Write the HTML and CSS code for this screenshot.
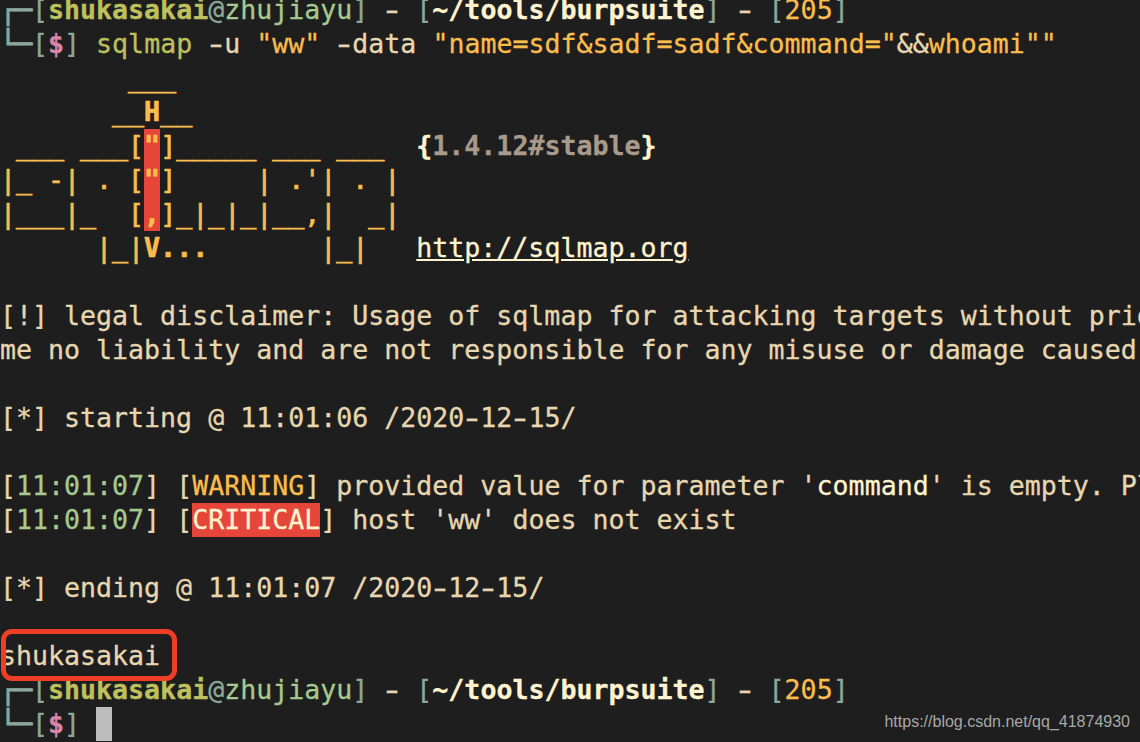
FILE: index.html
```html
<!DOCTYPE html>
<html lang="en">
<head>
<meta charset="utf-8">
<title>sqlmap terminal</title>
<link rel="stylesheet" href="styles.css">
</head>
<body>
<main class="term">
<pre class="screen"><span class="frame"><span class="corner">┌─</span>[</span><b class="olive">shukasakai</b><span class="frame">@</span><span class="green">zhujiayu</span><span class="frame">]</span> <span class="dash">-</span> <span class="frame">[</span><b class="white">~/tools/burpsuite</b><span class="frame">]</span> <span class="dash">-</span> <span class="frame">[</span><span class="yellow">205</span><span class="frame">]</span>
<span class="frame"><span class="corner">└─</span>[</span><b class="pink">$</b><span class="frame">]</span> <span class="olive">sqlmap</span> <span class="dash">-</span>u <span class="yellow">"ww"</span> <span class="dash">-</span>data <span class="yellow">"name=sdf&amp;sadf=sadf&amp;command="</span>&amp;&amp;<span class="yellow">whoami""</span>
<span class="banner">        ___</span>
<span class="banner">       __<b>H</b>__</span>
<span class="banner"> ___ ___[<b class="redcell">"</b>]_____ ___ ___  </span><b class="brace">{</b><b class="version">1.4.12#stable</b><b class="brace">}</b>
<span class="banner">|_ -| . [<b class="redcell">"</b>]     | .'| . |</span>
<span class="banner">|___|_  [<b class="redcell">,</b>]_|_|_|__,|  _|</span>
<span class="banner">      |_|<b>V...</b>       |_|   </span><span class="link">http://sqlmap.org</span>

[!] legal disclaimer: Usage of sqlmap for attacking targets without prior mutual consent is illegal.
me no liability and are not responsible for any misuse or damage caused by this program

[*] starting @ 11:01:06 /2020<span class="dash">-</span>12<span class="dash">-</span>15/

[<span class="green">11:01:07</span>] [<span class="yellow">WARNING</span>] provided value for parameter '<span class="white">command</span>' is empty. Please
[<span class="green">11:01:07</span>] [<span class="critical">CRITICAL</span>] host 'ww' does not exist

[*] ending @ 11:01:07 /2020<span class="dash">-</span>12<span class="dash">-</span>15/

shukasakai
<span class="frame"><span class="corner">┌─</span>[</span><b class="olive">shukasakai</b><span class="frame">@</span><span class="green">zhujiayu</span><span class="frame">]</span> <span class="dash">-</span> <span class="frame">[</span><b class="white">~/tools/burpsuite</b><span class="frame">]</span> <span class="dash">-</span> <span class="frame">[</span><span class="yellow">205</span><span class="frame">]</span>
<span class="frame"><span class="corner">└─</span>[</span><b class="pink">$</b><span class="frame">]</span> <span class="cursor"> </span></pre>
<div class="callout"></div>
<div class="watermark">https://blog.csdn.net/qq_41874930</div>
</main>
</body>
</html>
```
FILE: styles.css
```css
html, body {
  margin: 0;
  height: 100%;
  background: #1e1e1e;
  overflow: hidden;
}
.term {
  position: relative;
  width: 1140px;
  height: 742px;
  overflow: hidden;
  background: #1e1e1e;
}
.screen {
  margin: -7px 0 0;
  font-family: "DejaVu Sans Mono", monospace;
  font-size: 26.6px;
  line-height: 34px;
  color: #e6d7b0;
  white-space: pre;
  -webkit-text-stroke: 0.3px currentColor;
}
b { font-weight: 700; }
.frame { color: #8ba89b; }
.corner { -webkit-text-stroke: 1px currentColor; }
.olive { color: #bdc05c; }
.green { color: #a6c98f; }
.yellow { color: #f9bd4e; }
.banner { color: #f9bd4e; -webkit-text-stroke: 0.7px currentColor; }
.white { color: #fdf3d0; }
.pink { color: #d987a8; }
.brace { color: #fdf3d0; }
.version { color: #a89a8a; }
.link { color: #fdf3d0; text-decoration: underline; -webkit-text-stroke: 0.3px currentColor; }
.dash { display: inline-block; transform: scaleX(1.5); }
.redcell, .critical, .cursor {
  display: inline-block;
  height: 34px;
  line-height: 34px;
  vertical-align: top;
}
.redcell { background: #e64539; }
.critical { background: #e64539; color: #fdf3d0; }
.cursor { background: #bdbdbd; }
.callout {
  position: absolute;
  left: 1px;
  top: 629px;
  width: 166px;
  height: 42px;
  border: 5px solid #ee3f26;
  border-radius: 11px;
}
.watermark {
  position: absolute;
  right: 10px;
  top: 713px;
  font-family: "Liberation Sans", Arial, sans-serif;
  font-size: 16px;
  line-height: 18px;
  color: #a8a8a8;
}
```
